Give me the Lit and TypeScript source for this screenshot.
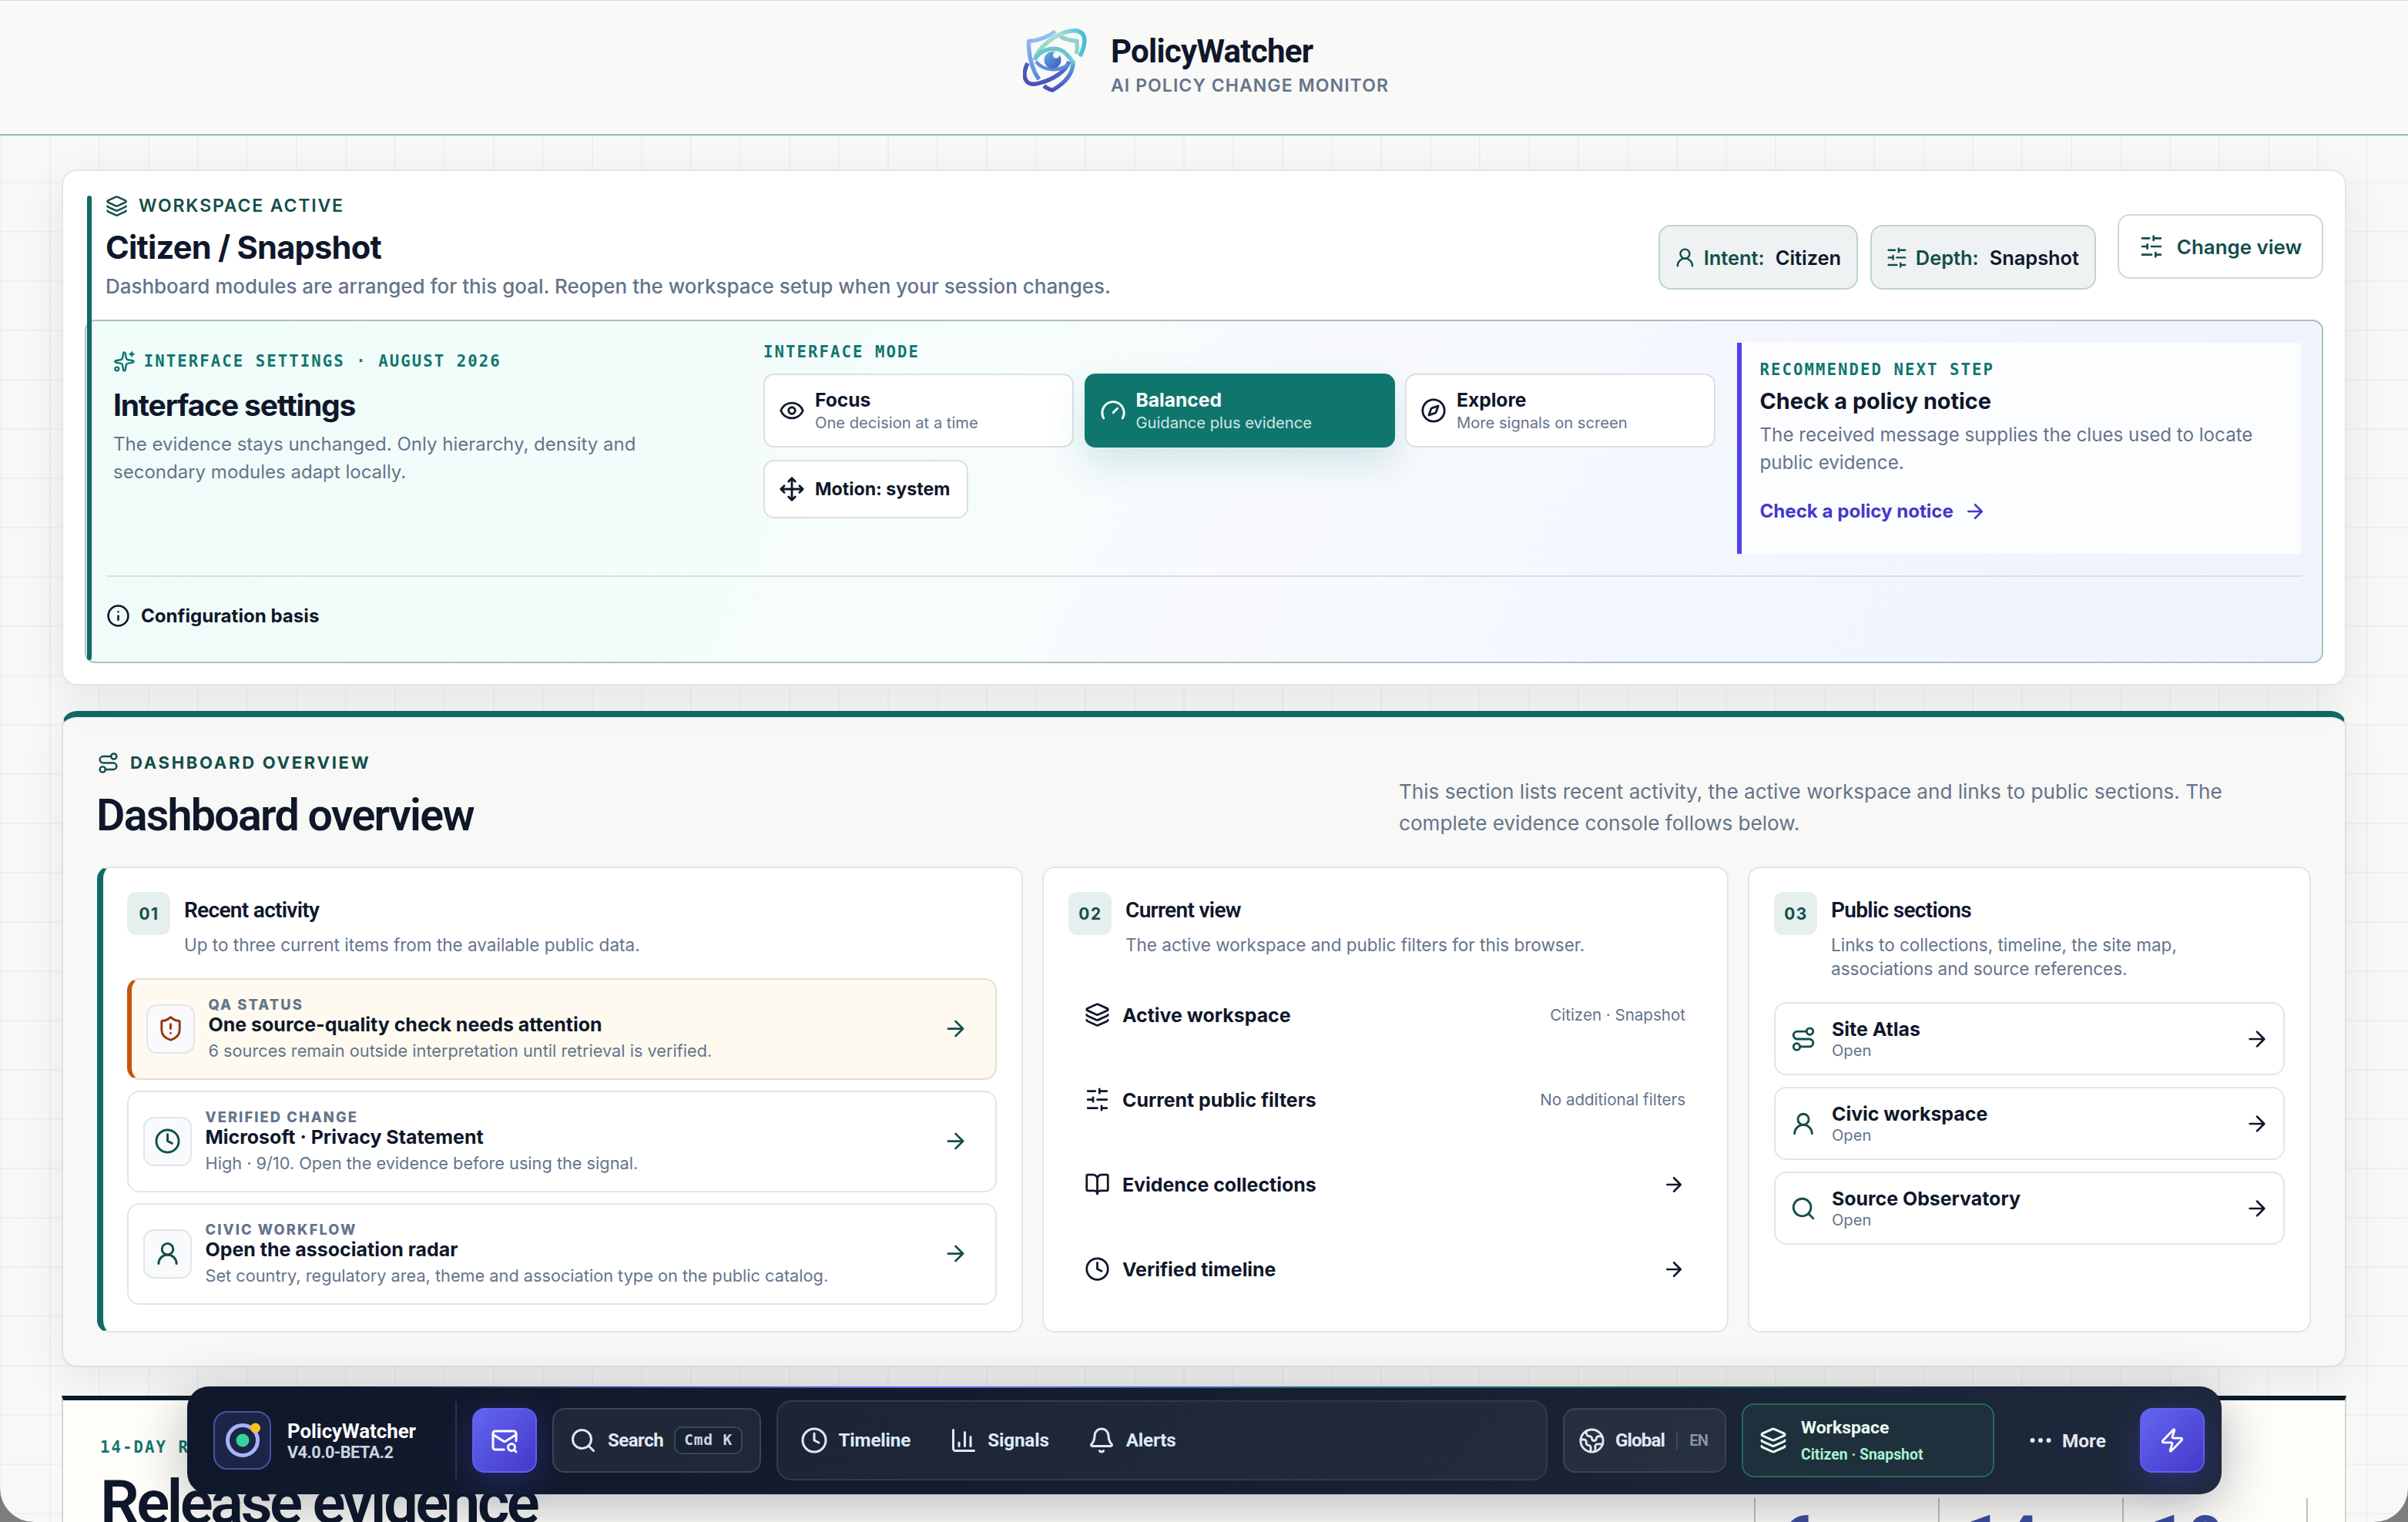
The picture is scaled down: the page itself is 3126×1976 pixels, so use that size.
import { LitElement, html, svg, css } from "lit";
import { classMap } from "lit/directives/class-map.js";

const ICONS: Record<string, any> = {
  layers: svg`<path d="M12.83 2.18a2 2 0 0 0-1.66 0L2.6 6.08a1 1 0 0 0 0 1.83l8.58 3.91a2 2 0 0 0 1.66 0l8.58-3.9a1 1 0 0 0 0-1.83z"/><path d="M2 12a1 1 0 0 0 .58.91l8.6 3.91a2 2 0 0 0 1.65 0l8.58-3.9A1 1 0 0 0 22 12"/><path d="M2 17a1 1 0 0 0 .58.91l8.6 3.91a2 2 0 0 0 1.65 0l8.58-3.9A1 1 0 0 0 22 17"/>`,
  user: svg`<circle cx="12" cy="8" r="5"/><path d="M20 21a8 8 0 0 0-16 0"/>`,
  sliders: svg`<path d="M21 4h-7M10 4H3M21 12h-9M8 12H3M21 20h-5M12 20H3M14 2v4M8 10v4M16 18v4"/>`,
  sparkles: svg`<path d="M11.017 2.814a1 1 0 0 1 1.966 0l1.051 5.558a2 2 0 0 0 1.594 1.594l5.558 1.051a1 1 0 0 1 0 1.966l-5.558 1.051a2 2 0 0 0-1.594 1.594l-1.051 5.558a1 1 0 0 1-1.966 0l-1.051-5.558a2 2 0 0 0-1.594-1.594l-5.558-1.051a1 1 0 0 1 0-1.966l5.558-1.051a2 2 0 0 0 1.594-1.594z"/><path d="M20 2v4M22 4h-4"/><circle cx="4" cy="20" r="2"/>`,
  eye: svg`<path d="M2.062 12.348a1 1 0 0 1 0-.696 10.75 10.75 0 0 1 19.876 0 1 1 0 0 1 0 .696 10.75 10.75 0 0 1-19.876 0"/><circle cx="12" cy="12" r="3"/>`,
  gauge: svg`<path d="m12 14 4-4"/><path d="M3.34 19a10 10 0 1 1 17.32 0"/>`,
  compass: svg`<path d="m16.24 7.76-1.804 5.411a2 2 0 0 1-1.265 1.265L7.76 16.24l1.804-5.411a2 2 0 0 1 1.265-1.265z"/><circle cx="12" cy="12" r="10"/>`,
  move: svg`<path d="M12 2v20M15 19l-3 3-3-3M19 9l3 3-3 3M2 12h20M5 9l-3 3 3 3M9 5l3-3 3 3"/>`,
  info: svg`<circle cx="12" cy="12" r="10"/><path d="M12 16v-4M12 8h.01"/>`,
  arrow: svg`<path d="M5 12h14M12 5l7 7-7 7"/>`,
  route: svg`<circle cx="6" cy="19" r="3"/><path d="M9 19h8.5a3.5 3.5 0 0 0 0-7h-11a3.5 3.5 0 0 1 0-7H15"/><circle cx="18" cy="5" r="3"/>`,
  shield: svg`<path d="M20 13c0 5-3.5 7.5-7.66 8.95a1 1 0 0 1-.67-.01C7.5 20.5 4 18 4 13V6a1 1 0 0 1 1-1c2 0 4.5-1.2 6.24-2.72a1.17 1.17 0 0 1 1.52 0C14.51 3.81 17 5 19 5a1 1 0 0 1 1 1z"/><path d="M12 8v4M12 16h.01"/>`,
  clock: svg`<circle cx="12" cy="12" r="10"/><path d="M12 6v6l4 2"/>`,
  book: svg`<path d="M12 7v14"/><path d="M3 18a1 1 0 0 1-1-1V4a1 1 0 0 1 1-1h5a4 4 0 0 1 4 4 4 4 0 0 1 4-4h5a1 1 0 0 1 1 1v13a1 1 0 0 1-1 1h-6a3 3 0 0 0-3 3 3 3 0 0 0-3-3z"/>`,
  search: svg`<path d="m21 21-4.34-4.34"/><circle cx="11" cy="11" r="8"/>`,
  mail: svg`<path d="M22 12.5V6a2 2 0 0 0-2-2H4a2 2 0 0 0-2 2v12c0 1.1.9 2 2 2h7.5"/><path d="m22 7-8.97 5.7a1.94 1.94 0 0 1-2.06 0L2 7"/><circle cx="18" cy="18" r="3"/><path d="m22 22-1.5-1.5"/>`,
  chart: svg`<path d="M3 3v16a2 2 0 0 0 2 2h16M18 17V9M13 17V5M8 17v-3"/>`,
  bell: svg`<path d="M10.268 21a2 2 0 0 0 3.464 0"/><path d="M3.262 15.326A1 1 0 0 0 4 17h16a1 1 0 0 0 .74-1.673C19.41 13.956 18 12.499 18 8A6 6 0 0 0 6 8c0 4.499-1.411 5.956-2.738 7.326"/>`,
  earth: svg`<path d="M21.54 15H17a2 2 0 0 0-2 2v4.54"/><path d="M7 3.34V5a3 3 0 0 0 3 3a2 2 0 0 1 2 2c0 1.1.9 2 2 2a2 2 0 0 0 2-2c0-1.1.9-2 2-2h3.17"/><path d="M11 21.95V18a2 2 0 0 0-2-2a2 2 0 0 1-2-2v-1a2 2 0 0 0-2-2H2.05"/><circle cx="12" cy="12" r="10"/>`,
  dots: svg`<circle cx="12" cy="12" r="1"/><circle cx="19" cy="12" r="1"/><circle cx="5" cy="12" r="1"/>`,
  zap: svg`<path d="M4 14a1 1 0 0 1-.78-1.63l9.9-10.2a.5.5 0 0 1 .86.46l-1.92 6.02A1 1 0 0 0 13 10h7a1 1 0 0 1 .78 1.63l-9.9 10.2a.5.5 0 0 1-.86-.46l1.92-6.02A1 1 0 0 0 11 14z"/>`,
};

const icon = (name: string, size: number) => html`<svg class="icon" width=${size} height=${size} viewBox="0 0 24 24" aria-hidden="true">${ICONS[name]}</svg>`;

const MODES = [
  { icon: "eye", title: "Focus", note: "One decision at a time" },
  { icon: "gauge", title: "Balanced", note: "Guidance plus evidence", active: true },
  { icon: "compass", title: "Explore", note: "More signals on screen" },
];
const ACTIVITY = [
  { icon: "shield", label: "QA status", title: "One source-quality check needs attention", note: "6 sources remain outside interpretation until retrieval is verified.", warn: true },
  { icon: "clock", label: "Verified change", title: "Microsoft · Privacy Statement", note: "High · 9/10. Open the evidence before using the signal." },
  { icon: "user", label: "Civic workflow", title: "Open the association radar", note: "Set country, regulatory area, theme and association type on the public catalog." },
];
const VIEW = [
  { icon: "layers", title: "Active workspace", value: "Citizen · Snapshot" },
  { icon: "sliders", title: "Current public filters", value: "No additional filters" },
  { icon: "book", title: "Evidence collections" },
  { icon: "clock", title: "Verified timeline" },
];
const SECTIONS = [
  { icon: "route", title: "Site Atlas" },
  { icon: "user", title: "Civic workspace" },
  { icon: "search", title: "Source Observatory" },
];
const NAV = [
  { icon: "clock", title: "Timeline" },
  { icon: "chart", title: "Signals" },
  { icon: "bell", title: "Alerts" },
];

class AppRoot extends LitElement {
  static styles = css`
    :host { display: block; height: 1976px; width: 3126px; overflow: hidden; position: relative; background: #7d7e7c;
      font-family: Inter, "Liberation Sans", sans-serif; color: #0f172a; }
    * { box-sizing: border-box; margin: 0; }
    .icon { display: block; flex: none; fill: none; stroke: currentColor; stroke-width: 2; stroke-linecap: round; stroke-linejoin: round; }
    .grow { flex: 1; }
    .page { height: 1976px; overflow: hidden; border-radius: 0 0 44px 44px; background-color: #f8f8f6;
      background-image: linear-gradient(90deg, rgba(15, 50, 50, .035) 2px, transparent 2px), linear-gradient(rgba(15, 50, 50, .035) 2px, transparent 2px);
      background-size: 64px 64px; background-position: 0 44px; }
    header { height: 176px; border-top: 1px solid #d9d9d9; border-bottom: 2px solid #93bcb8; background: #f9f9f7; display: flex; justify-content: center; padding: 36px 0 0 5px; gap: 31px; }
    .mark { width: 83px; height: 84px; display: block; }
    .brand-name { font: 700 42px/48px Roboto, sans-serif; letter-spacing: -.75px; margin-top: 6px; }
    .brand-sub { font-weight: 600; font-size: 23px; line-height: 28px; letter-spacing: 1.08px; color: #64748b; margin-top: 6px; text-transform: uppercase; }
    main { padding: 44px 80px 0; }

    .workspace { position: relative; height: 670px; background: #fff; border: 2px solid #e4e6e4; border-radius: 20px; padding: 26px 28px;
      box-shadow: 0 16px 56px rgba(15, 23, 42, .08); }
    .bar { position: absolute; z-index: 1; left: 31px; top: 32px; bottom: 31px; width: 6px; border-radius: 3px; background: #116a66; }
    .ws-head { height: 167px; display: flex; align-items: flex-start; padding-left: 27px; }
    .ws-title { flex: 1; padding-top: 5px; }
    .eyebrow { display: flex; align-items: center; height: 28px; gap: 14px; color: #134e4a; text-transform: uppercase; font-weight: 600; font-size: 23px; letter-spacing: 1.86px; }
    .ws-title h1 { font-weight: 700; font-size: 41.6px; line-height: 50px; letter-spacing: -.75px; margin-top: 15px; }
    .ws-title p { font-weight: 500; font-size: 25.96px; line-height: 38px; margin-top: 6.5px; color: #64748b; }
    .chip { display: flex; align-items: center; width: 259px; height: 84px; margin-top: 44px; border: 2px solid #bcd5ce; border-radius: 16px; background: #eef2f2; padding: 0 0 0 18px; gap: 10px;
      font-weight: 600; font-size: 25.4px; color: #134e4a; }
    .chip b { font-weight: 600; color: #0f172a; margin-left: 4px; }
    .chip.wide { width: 293px; margin-left: 16px; }
    .change { display: flex; align-items: center; justify-content: center; gap: 17px; width: 267px; height: 84px; margin: 30px 0 0 28px; border: 2px solid #c6dcd6; border-radius: 16px; font-weight: 600; font-size: 25.9px; color: #134e4a; background: #fff; }

    .panel { height: 446px; border: 2px solid #a9c2bf; border-radius: 14px; padding: 28px 26px 0; background: linear-gradient(118deg, #effcf9 0%, #f6fdfc 38%, #f8fafd 52%, #f2f6fe 76%, #f0f2fe 100%); }
    .panel-grid { display: grid; grid-template-columns: 825px 1236px 732px; column-gap: 28px; height: 274px; }
    .mono { font: 700 20.6px/24px "DejaVu Sans Mono", monospace; letter-spacing: 2.1px; color: #0f766e; text-transform: uppercase; }
    .settings { padding: 10px 0 0 9px; }
    .settings .top { display: flex; align-items: center; gap: 11px; height: 28px; color: #0f766e; }
    .settings h2 { font-weight: 700; font-size: 39px; line-height: 48px; letter-spacing: -1.18px; margin-top: 18.5px; }
    .settings p { font-size: 24.03px; line-height: 36px; color: #64748b; margin-top: 9px; max-width: 700px; }
    .modes { display: grid; grid-template-columns: repeat(3, 1fr); gap: 13.5px; margin-top: 16px; }
    .mode { display: flex; align-items: center; gap: 13px; height: 96px; padding: 0 18px; border: 2px solid #dcdfe0; border-radius: 14px; background: #fff; }
    .mode h3 { font-weight: 700; font-size: 24.6px; line-height: 30px; }
    .mode p { font-size: 20.15px; line-height: 26px; margin-top: 2px; color: #64748b; }
    .mode.active { background: #0f766e; border-color: #0f766e; color: #fff; box-shadow: 0 20px 48px rgba(15, 118, 110, .16); }
    .mode.active p { color: #d3e6e3; }
    .motion { width: 266px; height: 76px; margin-top: 16px; font-weight: 700; font-size: 23.15px; }
    .next { border-left: 6px solid #4f46e5; background: rgba(255, 255, 255, .78); padding: 23px 0 0 23.5px; }
    .next h3 { font-weight: 700; font-size: 28.8px; line-height: 36px; margin-top: 10.5px; }
    .next p { font-size: 24.17px; line-height: 36px; margin-top: 8px; color: #64748b; max-width: 680px; }
    .next .link { display: flex; align-items: center; gap: 13px; margin-top: 30px; height: 30px; font-weight: 700; font-size: 24.1px; color: #4338ca; }
    .basis { display: flex; align-items: center; gap: 14px; height: 102px; margin-top: 28px; border-top: 2px solid #d9dfe2; font-weight: 700; font-size: 24.1px; }

    .overview { margin-top: 33px; height: 852px; border: 2px solid #dfe1e0; border-top: 8px solid #116a66; border-radius: 20px; background: #f8f8f6; padding: 45px 44px 0;
      box-shadow: 0 16px 56px rgba(15, 23, 42, .07); }
    .ov-head { display: flex; align-items: flex-end; justify-content: space-between; }
    .overview .eyebrow { font-weight: 700; font-size: 22px; letter-spacing: 2.73px; gap: 14px; }
    .ov-head h2 { font: 600 57.4px/68px Roboto, sans-serif; letter-spacing: -1.75px; margin: 21px 0 .5px -1px; }
    .ov-head p { width: 1184px; padding-right: 66px; padding-bottom: 5px; font-size: 26.1px; line-height: 41px; color: #64748b; }
    .cards { display: grid; grid-template-columns: 1202px 891px 1fr; column-gap: 25px; margin-top: 31px; height: 605px; }
    .card { border: 2px solid #e3e5e4; border-radius: 16px; background: #fff; padding: 31.5px 32px; display: flex; flex-direction: column; }
    .card.lead { border-left: 8px solid #116a66; padding-left: 31px; }
    .card-head { display: flex; align-items: flex-start; gap: 18px; margin-bottom: 28.5px; }
    .num { flex: none; width: 56px; height: 56px; border-radius: 12px; background: #e5efed; color: #134e4a; display: flex; align-items: center; justify-content: center; font-weight: 700; font-size: 20.8px; letter-spacing: 1.6px; padding-left: 1px; }
    .card-head h3 { font: 600 28px/34px Roboto, sans-serif; letter-spacing: -.68px; margin-top: 6.5px; }
    .card-head p { font-size: 22.5px; line-height: 31px; margin-top: 12px; color: #64748b; }
    .list { display: flex; flex-direction: column; gap: 14.6px; }
    .act { height: 131.5px; display: flex; align-items: center; border: 2px solid #e3e5e6; border-radius: 16px; padding: 0 35px 0 18.5px; gap: 18px; color: #134e4a; }
    .act.warn { border-color: #e5ded0; border-left: 6px solid #c2570c; background: #fffaf0; }
    .act-icon { width: 63px; height: 64px; border: 2px solid #e0e5ea; border-radius: 14px; background: #f8fafc; display: flex; align-items: center; justify-content: center; }
    .warn .act-icon { color: #9a3412; }
    .act-label { font-weight: 800; font-size: 18.3px; line-height: 22px; letter-spacing: 2.1px; color: #64748b; text-transform: uppercase; }
    .act-title { font-weight: 700; font-size: 24.97px; line-height: 30px; color: #0f172a; }
    .act-note { font-size: 21.72px; line-height: 28px; margin-top: 4.5px; color: #64748b; padding-bottom: .5px; }
    .view { height: 95.4px; display: flex; align-items: center; padding: 0 22px 0 21px; gap: 16px; font-weight: 650; font-size: 24.9px; }
    .view small { font-weight: 400; font-size: 20.55px; color: #64748b; }
    .sect { height: 95.4px; display: flex; align-items: center; border: 2px solid #e3e5e6; border-radius: 16px; padding: 0 18px 0 19px; gap: 20px; }
    .sect .icon:first-child { color: #134e4a; }
    .sect h4 { font-weight: 650; font-size: 24.9px; line-height: 30px; }
    .sect p { font-size: 20.1px; line-height: 24px; margin-top: 1px; color: #64748b; }

    .release { margin-top: 37px; height: 400px; border: 2px solid #cdd6d6; border-top: 6px solid #0c1a26; background: #fffefa; display: flex; justify-content: space-between; padding: 49px 48px 0 48px; }
    .release h2 { font: 600 80px/96px Roboto, sans-serif; letter-spacing: -3.65px; margin-top: 12px; }
    .stats { display: grid; grid-template-columns: repeat(3, 239px); margin-top: 78px; border-right: 2px solid #b7c5c5; }
    .stat { border-left: 2px solid #b7c5c5; padding: 4px 0 0 34px; font: 700 80px/96px Roboto, sans-serif; letter-spacing: 3px; color: #3f4da0; }

    .dock { position: absolute; left: 243px; top: 1800px; width: 2641px; height: 140px; border-radius: 28px; display: flex; align-items: center; gap: 20px; padding: 0 22px 0 34px;
      background: linear-gradient(90deg, transparent 8%, #6366f1 35%, rgba(16, 185, 129, .5) 68%, transparent 88%) top / 100% 2px no-repeat, linear-gradient(135deg, #0f172a, #131c2e 35%, #1e293b);
      box-shadow: 0 16px 72px rgba(15, 23, 42, .3); font-family: Roboto, sans-serif; color: #e2e8f0; }
    .dock-brand { width: 316px; height: 100px; display: flex; align-items: center; border-right: 2px solid #2c3648; gap: 21px; }
    .orb { width: 75px; height: 76px; border: 2px solid #4c4fa6; border-radius: 18px; background: #1d2547; display: flex; align-items: center; justify-content: center; }
    .orb svg { display: block; }
    .dock-name { font-weight: 700; font-size: 25.8px; line-height: 30px; color: #fff; }
    .dock-ver { font-weight: 700; font-size: 21.6px; line-height: 24px; letter-spacing: -.5px; margin-top: 1px; color: #cbd5e1; }
    .cta { flex: none; width: 84px; height: 84px; border-radius: 16px; border: 2px solid #625ff0; background: linear-gradient(135deg, #6366f1, #4338ca); display: flex; align-items: center; justify-content: center; color: #fff; box-shadow: 0 10px 40px rgba(79, 70, 229, .32); }
    .btn { flex: none; height: 84px; border: 2px solid #394456; border-radius: 16px; background: rgba(255, 255, 255, .06); display: flex; align-items: center; gap: 14px; padding: 0 20px; font-weight: 700; font-size: 24px; letter-spacing: -.5px; }
    .find { width: 271px; }
    .key { font: 700 19.5px/32px "DejaVu Sans Mono", monospace; letter-spacing: .8px; width: 89px; text-align: center; border: 2px solid #3a4557; border-radius: 10px; color: #cbd5e1; background: rgba(15, 23, 42, .35); }
    .nav { flex: 1; height: 104px; border: 2px solid #2f3b4c; border-radius: 20px; background: rgba(255, 255, 255, .045); display: flex; align-items: center; gap: 50.5px; padding-left: 29px; }
    .nav-item { display: flex; align-items: center; gap: 13.5px; font-weight: 700; font-size: 24.2px; letter-spacing: -.14px; color: #dbeafe; }
    .region { width: 212px; gap: 13px; padding: 0 18px; letter-spacing: -.8px; }
    .lang { border-left: 2px solid #3f495b; padding-left: 15px; margin-left: 2px; font-weight: 600; font-size: 20px; line-height: 24px; letter-spacing: -.6px; color: #8b97aa; }
    .space { width: 328px; height: 96px; border-color: #226a58; background: #1e303b; gap: 18px; padding-left: 21px; color: #ecfdf5; letter-spacing: 0; }
    .space-name { font-weight: 700; font-size: 22.9px; line-height: 28px; }
    .space-val { font-weight: 700; font-size: 19.4px; line-height: 24px; margin-top: 9px; color: #a7f3d0; }
    .more { width: 149px; display: flex; align-items: center; gap: 10px; padding-left: 22px; font-weight: 700; font-size: 24.3px; }
  `;

  logo() {
    return html`<svg class="mark" viewBox="0 0 83 84" fill="none" stroke-width="5.4" stroke-linejoin="round">
      <defs>
        <linearGradient id="ga" x1="0" y1="0" x2="1" y2="0"><stop offset="0" stop-color="#8ad9c9"/><stop offset=".5" stop-color="#a5e0d3"/><stop offset="1" stop-color="#45bcdc"/></linearGradient>
        <linearGradient id="gb" x1="0" y1="1" x2="1" y2="0"><stop offset="0" stop-color="#4a4cb8"/><stop offset="1" stop-color="#4f6fd0"/></linearGradient>
        <linearGradient id="gc" x1="0" y1="0" x2="0" y2="1"><stop offset="0" stop-color="#9cc4f6"/><stop offset="1" stop-color="#5c86dd"/></linearGradient>
        <linearGradient id="gd" x1="0" y1="0" x2="1" y2="1"><stop offset="0" stop-color="#5fb2e6"/><stop offset="1" stop-color="#4650b8"/></linearGradient>
        <linearGradient id="ge" x1="0" y1="0" x2="0" y2="1"><stop offset="0" stop-color="#55b4e0"/><stop offset="1" stop-color="#4b4fbd"/></linearGradient>
      </defs>
      <path d="M42 3.500C32 11.500 20 15.500 7.500 16.500C7 34 12 55 21 66" stroke="url(#gc)"/>
      <path d="M48 10C54 14 62 15.500 70 16.500C70.500 22 70.500 27 69.500 33" stroke="#8fd3cf"/>
      <path d="M27 74.500C31 77.500 35 79.500 38.500 80C54 71 66 58 65 42" stroke="url(#ge)"/>
      <path d="M16 37C26 17 53 1 70 3C84 6 81 22 74 36" stroke="url(#ga)"/>
      <path d="M6 45C-3 64 4 76 21 71C40 66 55 56 60 43" stroke="url(#gb)"/>
      <path d="M15 41C22 26 45 21 56 33C61 38 64 42 65 46" stroke="#6cc5cf"/>
      <path d="M17 43C26 55 46 57 60 46" stroke="#5a8ee0" stroke-width="4.500"/>
      <circle cx="38.500" cy="41" r="11" fill="url(#gd)"/>
      <circle cx="43" cy="34.500" r="4" fill="#f9f9f7"/>
    </svg>`;
  }

  cardHead(num: string, title: string, note: any) {
    return html`<div class="card-head"><span class="num">${num}</span><div><h3>${title}</h3><p>${note}</p></div></div>`;
  }

  render() {
    return html`
      <div class="page">
        <header>
          ${this.logo()}
          <div><div class="brand-name">PolicyWatcher</div><div class="brand-sub">AI Policy Change Monitor</div></div>
        </header>
        <main>
          <section class="workspace">
            <span class="bar"></span>
            <div class="ws-head">
              <div class="ws-title">
                <div class="eyebrow">${icon("layers", 29)}<span>Workspace active</span></div>
                <h1>Citizen / Snapshot</h1>
                <p>Dashboard modules are arranged for this goal. Reopen the workspace setup when your session changes.</p>
              </div>
              <div class="chip">${icon("user", 28.8)}<span>Intent:</span><b>Citizen</b></div>
              <div class="chip wide">${icon("sliders", 28.8)}<span>Depth:</span><b>Snapshot</b></div>
              <div class="change">${icon("sliders", 32)}<span>Change view</span></div>
            </div>
            <div class="panel">
              <div class="panel-grid">
                <div class="settings">
                  <div class="top">${icon("sparkles", 28.8)}<span class="mono">Interface settings · August 2026</span></div>
                  <h2>Interface settings</h2>
                  <p>The evidence stays unchanged. Only hierarchy, density and secondary modules adapt locally.</p>
                </div>
                <div>
                  <div class="mono">Interface mode</div>
                  <div class="modes">
                    ${MODES.map((m) => html`<div class=${classMap({ mode: true, active: !!m.active })}>${icon(m.icon, 34)}<div><h3>${m.title}</h3><p>${m.note}</p></div></div>`)}
                  </div>
                  <div class="mode motion">${icon("move", 34)}<span>Motion: system</span></div>
                </div>
                <div class="next">
                  <div class="mono">Recommended next step</div>
                  <h3>Check a policy notice</h3>
                  <p>The received message supplies the clues used to locate public evidence.</p>
                  <div class="link"><span>Check a policy notice</span>${icon("arrow", 30)}</div>
                </div>
              </div>
              <div class="basis">${icon("info", 31)}<span>Configuration basis</span></div>
            </div>
          </section>

          <section class="overview">
            <div class="ov-head">
              <div>
                <div class="eyebrow">${icon("route", 29)}<span>Dashboard overview</span></div>
                <h2>Dashboard overview</h2>
              </div>
              <p>This section lists recent activity, the active workspace and links to public sections. The complete evidence console follows below.</p>
            </div>
            <div class="cards">
              <article class="card lead">
                ${this.cardHead("01", "Recent activity", "Up to three current items from the available public data.")}
                <div class="list">
                  ${ACTIVITY.map((a) => html`<div class=${classMap({ act: true, warn: !!a.warn })}>
                    <span class="act-icon">${icon(a.icon, 35)}</span>
                    <div class="grow"><div class="act-label">${a.label}</div><div class="act-title">${a.title}</div><div class="act-note">${a.note}</div></div>
                    ${icon("arrow", 33)}</div>`)}
                </div>
              </article>
              <article class="card">
                ${this.cardHead("02", "Current view", "The active workspace and public filters for this browser.")}
                <div class="list">
                  ${VIEW.map((v) => html`<div class="view">${icon(v.icon, 33)}<span class="grow">${v.title}</span>${v.value ? html`<small>${v.value}</small>` : icon("arrow", 30)}</div>`)}
                </div>
              </article>
              <article class="card">
                ${this.cardHead("03", "Public sections", html`Links to collections, timeline, the site map,<br>associations and source references.`)}
                <div class="list">
                  ${SECTIONS.map((s) => html`<div class="sect">${icon(s.icon, 34)}<div class="grow"><h4>${s.title}</h4><p>Open</p></div>${icon("arrow", 32)}</div>`)}
                </div>
              </article>
            </div>
          </section>

          <section class="release">
            <div><div class="mono">14-day release</div><h2>Release evidence</h2></div>
            <div class="stats"><div class="stat">6</div><div class="stat">14</div><div class="stat">10</div></div>
          </section>
        </main>
      </div>

      <nav class="dock">
        <div class="dock-brand">
          <span class="orb"><svg width="56" height="56" viewBox="0 0 56 56"><circle cx="28" cy="28" r="19.500" fill="none" stroke="#a5b4fc" stroke-width="5"/><circle cx="28" cy="28" r="8.500" fill="#34d399"/><circle cx="44.500" cy="12" r="6.500" fill="#fbbf24"/></svg></span>
          <div><div class="dock-name">PolicyWatcher</div><div class="dock-ver">V4.0.0-BETA.2</div></div>
        </div>
        <span class="cta">${icon("mail", 36)}</span>
        <div class="btn find">${icon("search", 36)}<span>Search</span><span class="key">Cmd K</span></div>
        <div class="nav">${NAV.map((n) => html`<div class="nav-item">${icon(n.icon, 36)}<span>${n.title}</span></div>`)}</div>
        <div class="btn region">${icon("earth", 35)}<span>Global</span><span class="lang">EN</span></div>
        <div class="btn space">${icon("layers", 36)}<div><div class="space-name">Workspace</div><div class="space-val">Citizen · Snapshot</div></div></div>
        <div class="more">${icon("dots", 36)}<span>More</span></div>
        <span class="cta">${icon("zap", 34)}</span>
      </nav>
    `;
  }
}
customElements.define("app-root", AppRoot);
